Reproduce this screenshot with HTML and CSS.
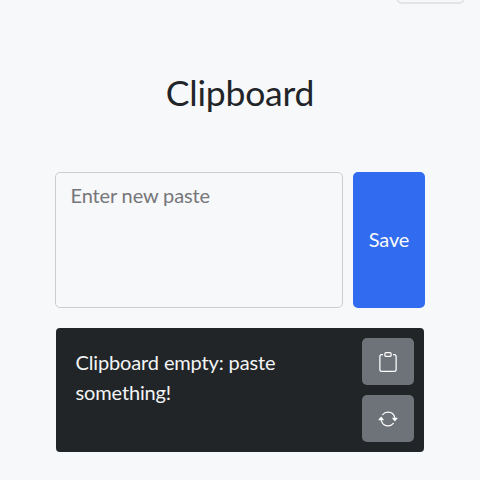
FILE: index.html
```html
<!DOCTYPE html>
<html lang="en">
<head>
<meta charset="utf-8">
<title>Clipboard</title>
<link rel="stylesheet" href="styles.css">
</head>
<body>
<header class="topbar"><div class="toggle"></div></header>
<main class="container">
  <h1 class="title">Clipboard</h1>
  <form class="paste-form">
    <textarea class="paste-input" placeholder="Enter new paste"></textarea>
    <button class="save" type="button">Save</button>
  </form>
  <section class="card">
    <p class="message">Clipboard empty: paste something!</p>
    <div class="actions">
      <button class="action" type="button" aria-label="Copy">
        <svg viewBox="0 0 16 16" fill="currentColor"><path d="M4 1.5H3a2 2 0 0 0-2 2V14a2 2 0 0 0 2 2h10a2 2 0 0 0 2-2V3.5a2 2 0 0 0-2-2h-1v1h1a1 1 0 0 1 1 1V14a1 1 0 0 1-1 1H3a1 1 0 0 1-1-1V3.5a1 1 0 0 1 1-1h1v-1z"/><path d="M9.500 1a.5.5 0 0 1 .5.5v1a.5.5 0 0 1-.5.5h-3a.5.5 0 0 1-.5-.5v-1a.5.5 0 0 1 .5-.5h3zm-3-1A1.500 1.500 0 0 0 5 1.500v1A1.500 1.500 0 0 0 6.500 4h3A1.500 1.500 0 0 0 11 2.500v-1A1.500 1.500 0 0 0 9.500 0h-3z"/></svg>
      </button>
      <button class="action" type="button" aria-label="Refresh">
        <svg viewBox="0 0 16 16" fill="currentColor"><path d="M11.534 7h3.932a.25.25 0 0 1 .192.41l-1.966 2.36a.25.25 0 0 1-.384 0l-1.966-2.360a.25.25 0 0 1 .192-.41zm-11 2h3.932a.25.25 0 0 0 .192-.41L2.692 6.230a.25.25 0 0 0-.384 0L.342 8.590A.25.25 0 0 0 .534 9z"/><path d="M8 3c-1.552 0-2.940.707-3.857 1.818a.5.5 0 1 1-.771-.636A6.002 6.002 0 0 1 13.917 7H12.900A5.002 5.002 0 0 0 8 3zM3.100 9a5.002 5.002 0 0 0 8.757 2.182.5.5 0 1 1 .771.636A6.002 6.002 0 0 1 2.083 9H3.100z"/></svg>
      </button>
    </div>
  </section>
</main>
</body>
</html>
```
FILE: styles.css
```css
* { box-sizing: border-box; }
body { margin: 0; height: 480px; overflow: hidden; background: #f7f8fa; color: #212529; font-family: Lato, sans-serif; font-size: 20px; letter-spacing: -0.14px; }
.topbar { height: 4px; display: flex; justify-content: flex-end; align-items: flex-end; padding-right: 15px; }
.toggle { width: 69px; height: 30px; flex: none; border: 2px solid #e2e4e6; border-radius: 6px; }
.container { width: 370px; margin: 0 0 0 55px; }
.title { margin: 0; padding-top: 67px; height: 168px; line-height: 44px; font-size: 35.5px; font-weight: 400; letter-spacing: -0.2px; text-align: center; }
.paste-form { display: flex; gap: 10px; height: 136px; }
.paste-input { flex: 1; min-width: 0; padding: 7px 14.5px; border: 1px solid #cbcdd0; border-radius: 5px; background: #f7f8fa; font: inherit; letter-spacing: inherit; line-height: 30px; resize: none; }
.paste-input::placeholder { color: #757679; opacity: 1; }
.save { width: 72px; padding: 0 0 2px; border: 0; border-radius: 5px; background: #316cf0; color: #f8f9fa; font: inherit; letter-spacing: inherit; }
.card { display: flex; margin: 20px 1px 0; height: 124px; padding: 10px; border-radius: 4px; background: #212528; color: #f3f4f5; }
.message { flex: 1; margin: 0; padding: 9px 9.5px; line-height: 30px; }
.actions { display: flex; flex-direction: column; gap: 10px; }
.action { width: 52px; height: 47px; padding: 0; border: 0; border-radius: 5px; background: #6d7379; color: #fff; display: grid; place-items: center; }
.action svg { width: 20px; height: 20px; }
```
